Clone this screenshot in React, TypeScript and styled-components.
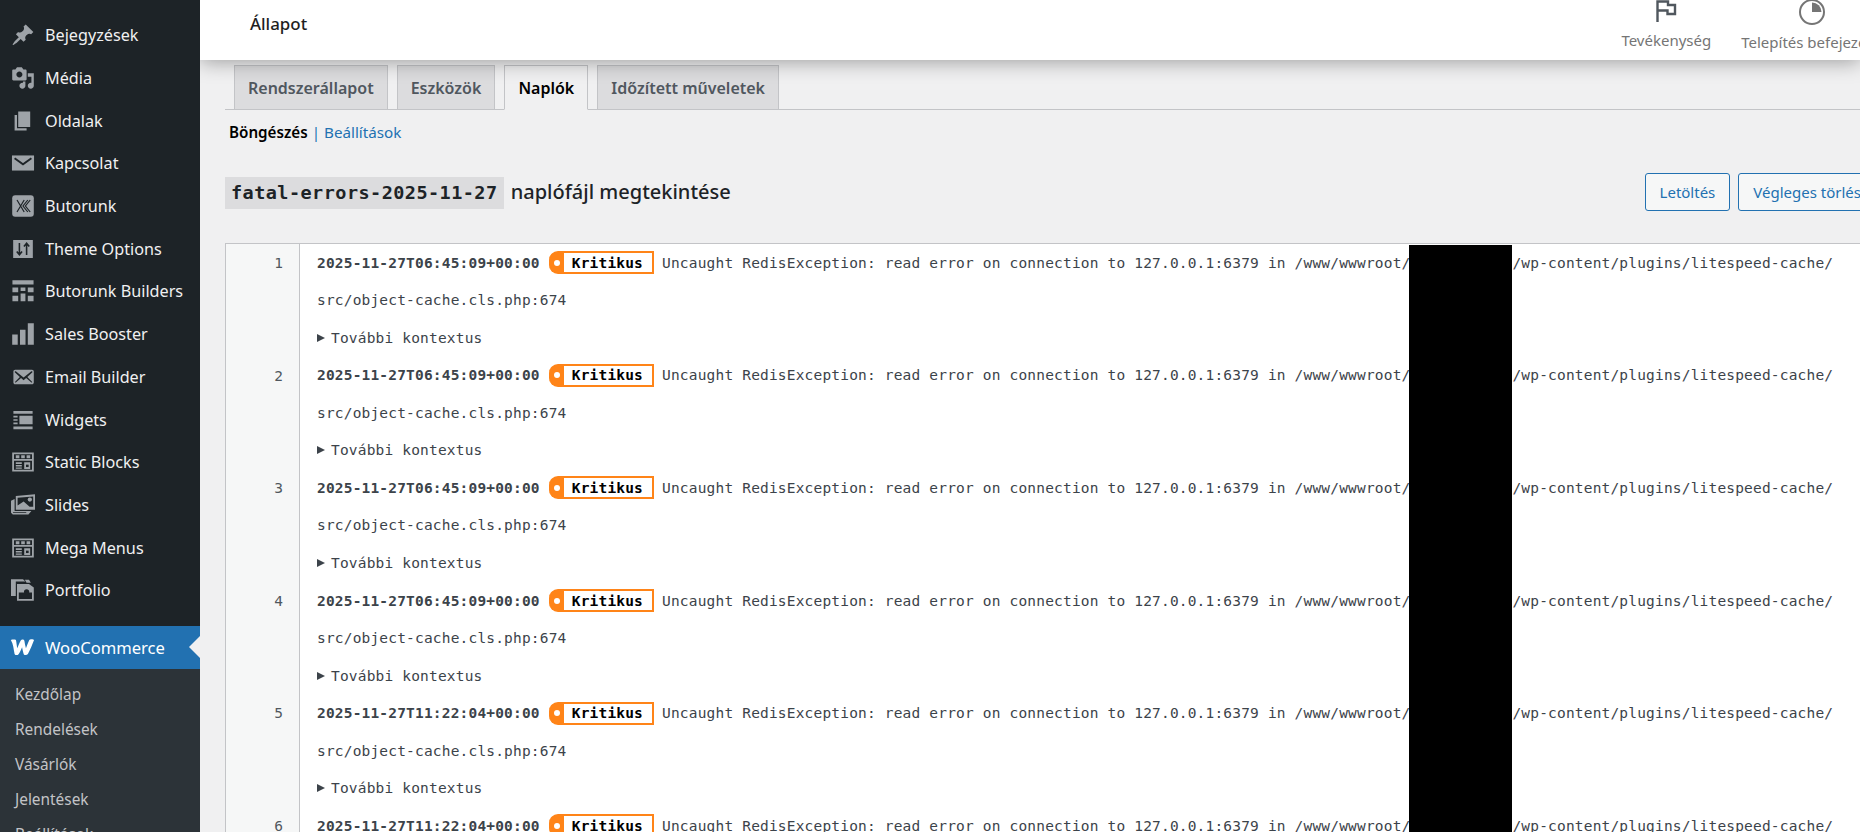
import React from "react";
import styled, { createGlobalStyle } from "styled-components";

const GlobalStyle = createGlobalStyle`
  html, body {
    margin: 0;
    padding: 0;
    height: 100%;
    overflow: hidden;
    background: #f0f0f1;
  }
  body {
    font-family: "Noto Sans", "Open Sans", sans-serif;
  }
`;

const mono = `"DejaVu Sans Mono", "Liberation Mono", monospace`;

type MenuItem = { label: string; icon: string };

const menu: MenuItem[] = [
  { label: "Bejegyzések", icon: "pin" },
  { label: "Média", icon: "media" },
  { label: "Oldalak", icon: "pages" },
  { label: "Kapcsolat", icon: "mail" },
  { label: "Butorunk", icon: "butorunk" },
  { label: "Theme Options", icon: "options" },
  { label: "Butorunk Builders", icon: "builders" },
  { label: "Sales Booster", icon: "bars" },
  { label: "Email Builder", icon: "mailAlt" },
  { label: "Widgets", icon: "widgets" },
  { label: "Static Blocks", icon: "blocks" },
  { label: "Slides", icon: "slides" },
  { label: "Mega Menus", icon: "blocks" },
  { label: "Portfolio", icon: "portfolio" },
];

const subMenu = ["Kezdőlap", "Rendelések", "Vásárlók", "Jelentések", "Beállítások"];

const tabs = ["Rendszerállapot", "Eszközök", "Naplók", "Időzített műveletek"];

const logRows = [
  { n: 1, date: "2025-11-27T06:45:09+00:00" },
  { n: 2, date: "2025-11-27T06:45:09+00:00" },
  { n: 3, date: "2025-11-27T06:45:09+00:00" },
  { n: 4, date: "2025-11-27T06:45:09+00:00" },
  { n: 5, date: "2025-11-27T11:22:04+00:00" },
  { n: 6, date: "2025-11-27T11:22:04+00:00" },
];

const MenuIcon: React.FC<{ name: string }> = ({ name }) => {
  switch (name) {
    case "pin":
      return (
        <svg viewBox="0 0 20 20" fill="currentColor">
          <path d="M10.44 3.02l1.82-1.82 6.36 6.35-1.83 1.82c-1.05-.68-2.48-.57-3.41.36l-.75.75c-.92.93-1.04 2.35-.35 3.41l-1.83 1.82-2.41-2.41-2.8 2.79c-.42.42-3.38 2.71-3.8 2.29s1.86-3.39 2.28-3.81l2.79-2.79L4.1 9.36l1.83-1.82c1.05.69 2.48.57 3.4-.36l.75-.75c.93-.92 1.05-2.35.36-3.41z" />
        </svg>
      );
    case "media":
      return (
        <svg viewBox="0 0 20 20" fill="currentColor">
          <path d="M13 11V4c0-.55-.45-1-1-1h-1.67L9 1H5L3.67 3H2c-.55 0-1 .45-1 1v7c0 .55.45 1 1 1h10c.55 0 1-.45 1-1zM7 4.5c1.38 0 2.5 1.12 2.5 2.5S8.38 9.5 7 9.5 4.5 8.38 4.5 7 5.62 4.5 7 4.5zM14 6h5v10.5c0 1.38-1.12 2.5-2.5 2.5S14 17.88 14 16.5s1.12-2.5 2.5-2.5c.17 0 .34.02.5.05V9h-3V6zm-4 8.05V13h2v3.5c0 1.38-1.12 2.5-2.5 2.5S7 17.88 7 16.5 8.12 14 9.5 14c.17 0 .34.02.5.05z" />
        </svg>
      );
    case "pages":
      return (
        <svg viewBox="0 0 20 20" fill="currentColor">
          <path d="M6 15V2h10v13H6zm-1 1h8v2H3V5h2v11z" />
        </svg>
      );
    case "mail":
      return (
        <svg viewBox="0 0 20 20" fill="currentColor">
          <path d="M.8 3.7h18.400v12.600H.8z" />
          <path d="M3 6l7 5 7-5" fill="none" stroke="#1d2327" strokeWidth="1.6" />
        </svg>
      );
    case "butorunk":
      return (
        <svg viewBox="0 0 20 20" fill="currentColor">
          <rect x="1" y="1" width="18" height="18" rx="2.500" />
          <path d="M5 5l6 10M11 5l-6 10M14 5l-4 5 4 5M16 5l-4 5 4 5" fill="none" stroke="#1d2327" strokeWidth="1" />
        </svg>
      );
    case "options":
      return (
        <svg viewBox="0 0 20 20" fill="currentColor">
          <path d="M1.800 2.500h16.400v15H1.800z" />
          <path d="M7 5v9.500M4.800 12L7 14.800 9.200 12M13 15V5.500M10.800 8L13 5.200 15.200 8" fill="none" stroke="#1d2327" strokeWidth="1.300" />
        </svg>
      );
    case "builders":
      return (
        <svg viewBox="0 0 20 20" fill="currentColor">
          <path d="M1.200 1h17.600v3.600H1.200zM1.200 7h4.800v4H1.200zM8 7h4v3H8zM14 7h4.800v4H14zM1.200 14h4.800v4.500H1.200zM8 12h4v6.500H8zM14 14h4.800v4.500H14z" />
        </svg>
      );
    case "bars":
      return (
        <svg viewBox="0 0 20 20" fill="currentColor">
          <path d="M1 10.500h4.600V19H1zM7.500 6.500h4.600V19H7.500zM14 1h5v18h-5z" />
        </svg>
      );
    case "mailAlt":
      return (
        <svg viewBox="0 0 20 20" fill="currentColor">
          <path d="M19 14.5v-9c0-.83-.67-1.5-1.5-1.5H3.49c-.83 0-1.5.67-1.5 1.5v9c0 .83.67 1.5 1.5 1.5H17.5c.83 0 1.5-.67 1.5-1.5zm-1.31-9.11c.33.33.15.67-.03.84L13.6 9.95l3.9 4.06c.12.14.2.36.06.51-.13.16-.43.15-.56.05l-4.37-3.73-2.14 1.95-2.13-1.95-4.37 3.73c-.13.1-.43.11-.56-.05-.14-.15-.06-.37.06-.51l3.9-4.06-4.06-3.72c-.18-.17-.36-.51-.03-.84s.67-.17.95.07l6.24 5.04 6.25-5.04c.28-.24.62-.4.95-.07z" />
        </svg>
      );
    case "widgets":
      return (
        <svg viewBox="0 0 20 20" fill="currentColor">
          <path d="M2 2.500h16v2.300H2zM2 15.500h16v2.300H2zM7 6.500h11v7H7zM2 6.500h3.500V8H2zM2 9.300h3.500v1.400H2zM2 12h3.500v1.500H2z" />
        </svg>
      );
    case "blocks":
      return (
        <svg viewBox="0 0 20 20" fill="currentColor">
          <path fillRule="evenodd" d="M1 2h18v16H1zM2.500 3.500v4h15v-4zM2.500 9v7.500h15V9z" />
          <path d="M4 4.300h3v2.500H4zM8.500 4.300h3v2.500h-3zM13 4.300h3v2.500h-3zM4 10.300h5v1.300H4zM4 12.500h5v1.300H4zM4 14.600h5v1.100H4zM11 10.300h5v5.500h-5z" />
          <path d="M12.500 12.200h2.200v2h-2.200z" fill="#1d2327" />
        </svg>
      );
    case "slides":
      return (
        <svg viewBox="0 0 20 20" fill="currentColor">
          <path d="M0 6.500L3 5v10h14l-2.500 3H1.500L0 16.500zM1.700 8v8h11v.6H1.700z" fillRule="evenodd" />
          <path fillRule="evenodd" d="M4 2.500L20 1v13H4zM5.500 4v6.500l5-3.500 5 4.500h3V3z" />
          <circle cx="15.700" cy="5.500" r="1.800" />
        </svg>
      );
    case "portfolio":
      return (
        <svg viewBox="0 0 20 20" fill="currentColor">
          <path d="M0 1h10l2 2H4v12H0z" />
          <path fillRule="evenodd" d="M5 5h10l4 3v11H5zM6.500 12v5.500h11V12z" />
          <path d="M11.500 1.500h3.500l1.500 2.500H13z" />
          <circle cx="13" cy="11.500" r="2.200" fill="#1d2327" />
        </svg>
      );
    default:
      return (
        <svg viewBox="0 0 24 16" fill="currentColor">
          <path d="M0.800 1.200c1.900-.5 4.200-.4 4.900.1.500 1.700.7 5.200 1.300 8 .9-2.500 1.900-5.300 3.300-7.600.8-1.200 3.100-1.100 3.500.4.400 2.300.800 4.900 1.500 7.100 1-2.600 1.900-5.400 3.100-7.800.7-1.100 4-1.100 4.700-.1-1.600 4-3.600 9.300-5.900 13.500-1 1.300-3.400 1.300-4 .1-.7-2-1.200-4.600-1.600-6.700-1.100 2.500-2 4.800-3.400 6.700-.9 1.200-3.100 1.100-3.800-.3C3.400 10.400 3.300 5 .800 1.200z" />
        </svg>
      );
  }
};

const App: React.FC = () => {
  return (
    <Page>
      <GlobalStyle />
      <Sidebar>
        <MenuList>
          {menu.map((item) => (
            <MenuRow key={item.label}>
              <IconBox>
                <MenuIcon name={item.icon} />
              </IconBox>
              {item.label}
            </MenuRow>
          ))}
        </MenuList>
        <ActiveRow>
          <WooIcon>
            <MenuIcon name="woo" />
          </WooIcon>
          WooCommerce
        </ActiveRow>
        <SubList>
          {subMenu.map((label) => (
            <SubRow key={label}>{label}</SubRow>
          ))}
        </SubList>
      </Sidebar>

      <Main>
        <TopBar>
          <PageTitle>Állapot</PageTitle>
          <ActivityPanel>
            <ActivityButton>
              <svg width="22" height="24" viewBox="0 0 22 24" fill="none" stroke="#50575e" strokeWidth="2.400">
                <path d="M2.500 23V2.500h10.500v3.500h7v9h-7.500v-3.500H2.500" />
              </svg>
              Tevékenység
            </ActivityButton>
            <ActivityButton>
              <svg width="28" height="26" viewBox="0 0 28 26">
                <circle cx="14" cy="13" r="12" fill="none" stroke="#757575" strokeWidth="2" />
                <path d="M14 3.500A9.500 9.500 0 0 1 23.500 13H14z" fill="#757575" />
              </svg>
              Telepítés befejezése
            </ActivityButton>
          </ActivityPanel>
        </TopBar>

        <Content>
          <TabBar>
            {tabs.map((tab) => (
              <Tab key={tab} $active={tab === "Naplók"}>
                {tab}
              </Tab>
            ))}
          </TabBar>

          <SubNav>
            <strong>Böngészés</strong>
            <SubNavSep>|</SubNavSep>
            <SubNavLink>Beállítások</SubNavLink>
          </SubNav>

          <HeadingRow>
            <Heading>
              <FileName>fatal-errors-2025-11-27</FileName> naplófájl megtekintése
            </Heading>
            <Actions>
              <ActionButton>Letöltés</ActionButton>
              <ActionButton>Végleges törlés</ActionButton>
            </Actions>
          </HeadingRow>

          <LogTable>
            {logRows.map((row) => (
              <LogRow key={row.n}>
                <LineNumber>{row.n}</LineNumber>
                <LogBody>
                  <LogLine>
                    <LogDate>{row.date}</LogDate>
                    <SeverityBadge>
                      <SeverityDot />
                      <SeverityLabel>Kritikus</SeverityLabel>
                    </SeverityBadge>
                    Uncaught RedisException: read error on connection to 127.0.0.1:6379 in /www/wwwroot/
                    <RedactedGap />
                    /wp-content/plugins/litespeed-cache/
                  </LogLine>
                  <LogLine>src/object-cache.cls.php:674</LogLine>
                  <LogLine>
                    <Caret />
                    További kontextus
                  </LogLine>
                </LogBody>
              </LogRow>
            ))}
            <Redaction />
          </LogTable>
        </Content>
      </Main>
    </Page>
  );
};

export default App;

const Page = styled.div`
  display: flex;
  width: 100%;
  height: 832px;
  overflow: hidden;
  background: #f0f0f1;
`;

const Sidebar = styled.aside`
  flex: 0 0 200px;
  background: #1d2327;
  padding-top: 14px;
  box-sizing: border-box;
  overflow: hidden;
`;

const MenuList = styled.div`
  margin-bottom: 14px;
`;

const MenuRow = styled.div`
  display: flex;
  align-items: center;
  height: 42.7px;
  padding-left: 11px;
  gap: 10px;
  color: #f0f0f1;
  font-size: 16.2px;
  white-space: nowrap;
`;

const IconBox = styled.span`
  display: flex;
  width: 24px;
  height: 24px;
  color: #9ea3a8;
  & svg {
    width: 100%;
    height: 100%;
  }
`;

const ActiveRow = styled(MenuRow)`
  position: relative;
  height: 43px;
  background: #2271b1;
  color: #fff;
  font-size: 16.6px;
  &::after {
    content: "";
    position: absolute;
    right: 0;
    top: 50%;
    margin-top: -11px;
    border: 11px solid transparent;
    border-right-color: #f0f0f1;
    border-left-width: 0;
  }
`;

const WooIcon = styled(IconBox)`
  color: #fff;
  width: 25px;
  margin-left: -1px;
`;

const SubList = styled.div`
  background: #2c3338;
  padding-top: 8px;
  height: 200px;
`;

const SubRow = styled.div`
  display: flex;
  align-items: center;
  height: 35px;
  padding-left: 15px;
  color: #c3c4c7;
  font-size: 15.4px;
`;

const Main = styled.main`
  flex: 1 1 0;
  min-width: 0;
  display: flex;
  flex-direction: column;
  position: relative;
`;

const TopBar = styled.header`
  position: relative;
  z-index: 2;
  flex: 0 0 60px;
  display: flex;
  justify-content: space-between;
  background: #fff;
  box-shadow: 0 2px 20px rgba(0, 0, 0, 0.35);
  padding-left: 50px;
  clip-path: inset(0 0 -40px 0);
`;

const PageTitle = styled.h1`
  margin: 13px 0 0;
  font-size: 16.9px;
  line-height: 22px;
  font-weight: 500;
  color: #1e1e1e;
`;

const ActivityPanel = styled.div`
  display: flex;
  gap: 30px;
  margin-right: -22px;
`;

const ActivityButton = styled.div`
  display: flex;
  flex-direction: column;
  align-items: center;
  color: #757575;
  font-size: 15px;
  line-height: 20px;
  white-space: nowrap;
  & svg {
    margin-top: -1px;
    margin-bottom: 7px;
  }
`;

const Content = styled.div`
  flex: 1 1 0;
  padding: 5px 0 0 25px;
  min-height: 0;
`;

const TabBar = styled.nav`
  display: flex;
  align-items: flex-end;
  gap: 9px;
  height: 44px;
  padding-left: 9px;
  border-bottom: 1px solid #c3c4c7;
`;

const Tab = styled.div<{ $active?: boolean }>`
  display: flex;
  align-items: center;
  box-sizing: border-box;
  padding: 0 13px;
  border: 1px solid #c3c4c7;
  border-bottom: ${(p) => (p.$active ? "1px solid #f0f0f1" : "none")};
  margin-bottom: ${(p) => (p.$active ? "-1px" : "0")};
  height: ${(p) => (p.$active ? "45px" : "44px")};
  background: ${(p) => (p.$active ? "#f0f0f1" : "#dcdcde")};
  color: ${(p) => (p.$active ? "#000" : "#50575e")};
  font-size: 16px;
  font-weight: 600;
  white-space: nowrap;
`;

const SubNav = styled.div`
  display: flex;
  align-items: center;
  height: 20px;
  margin: 12px 0 0 4px;
  font-size: 15.2px;
  color: #000;
  & strong {
    font-weight: 600;
  }
`;

const SubNavSep = styled.span`
  margin: 0 4px;
  color: #2271b1;
`;

const SubNavLink = styled.span`
  color: #2271b1;
`;

const HeadingRow = styled.div`
  display: flex;
  align-items: center;
  justify-content: space-between;
  height: 38px;
  margin-top: 32px;
`;

const Heading = styled.h2`
  margin: 0;
  font-size: 20px;
  font-weight: 500;
  color: #1d2327;
  white-space: nowrap;
`;

const FileName = styled.code`
  display: inline-block;
  padding: 0 6px;
  margin-right: 2px;
  height: 32px;
  line-height: 32px;
  background: #dcdcde;
  font-family: ${mono};
  font-size: 18.5px;
  font-weight: 700;
  letter-spacing: 0.45px;
`;

const Actions = styled.div`
  display: flex;
  gap: 8px;
  margin: 0 -16px 2px 0;
`;

const ActionButton = styled.button`
  height: 38px;
  padding: 0 14px;
  border: 1px solid #2271b1;
  border-radius: 3px;
  background: #f6f7f7;
  color: #2271b1;
  font-family: inherit;
  font-size: 15px;
  white-space: nowrap;
`;

const LogTable = styled.section`
  position: relative;
  margin-top: 31px;
  background: #fff;
  border-top: 1px solid #c3c4c7;
  border-left: 1px solid #c3c4c7;
  height: 700px;
  overflow: hidden;
`;

const LogRow = styled.div`
  display: grid;
  grid-template-columns: 74px 1fr;
  height: 112.6px;
`;

const LineNumber = styled.div`
  background: #f6f7f7;
  border-right: 1px solid #c3c4c7;
  padding-right: 16px;
  text-align: right;
  font-family: ${mono};
  font-size: 14.5px;
  line-height: 38px;
  color: #50575e;
`;

const LogBody = styled.div`
  padding-left: 17px;
`;

const LogLine = styled.div`
  display: flex;
  align-items: center;
  height: 37.53px;
  font-family: ${mono};
  font-size: 14.5px;
  letter-spacing: 0.18px;
  color: #3c434a;
  white-space: pre;
`;

const LogDate = styled.span`
  font-weight: 700;
`;

const SeverityBadge = styled.span`
  display: inline-flex;
  align-items: center;
  height: 23px;
  box-sizing: border-box;
  margin: 0 8px 0 9px;
  border: 2px solid #ff8418;
  border-left: 0;
  border-radius: 9px 0 0 9px;
  background: #ff8418;
  padding-left: 5px;
`;

const SeverityDot = styled.span`
  width: 6px;
  height: 6px;
  border-radius: 50%;
  background: #fff;
  margin-right: 4px;
`;

const SeverityLabel = styled.span`
  display: flex;
  align-items: center;
  height: 19px;
  padding: 0 9px 0 8px;
  background: #fff;
  color: #000;
  font-weight: 700;
`;

const RedactedGap = styled.span`
  display: inline-block;
  width: 102px;
`;

const Caret = styled.span`
  width: 0;
  height: 0;
  margin-right: 6px;
  border-style: solid;
  border-width: 4.5px 0 4.5px 8px;
  border-color: transparent transparent transparent #3c434a;
`;

const Redaction = styled.div`
  position: absolute;
  top: 1px;
  left: 1183px;
  width: 103px;
  height: 700px;
  background: #000;
`;
